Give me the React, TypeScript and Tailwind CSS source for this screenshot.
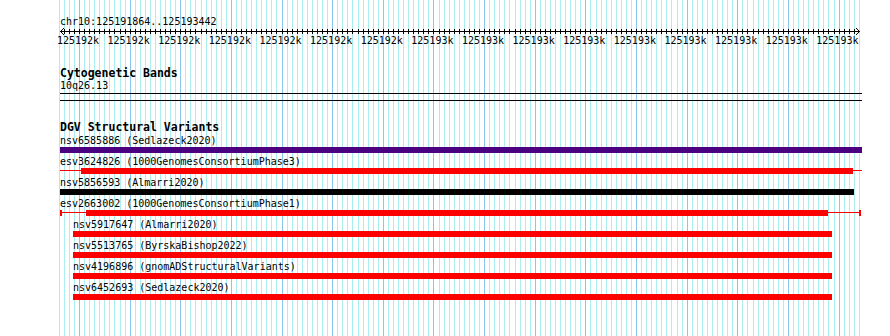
import React from 'react';

// page x of 125191900 and px per 10bp
const X0 = 79;
const STEP = 5.064;
const LEFT = 60;

const gridTicks = Array.from({ length: 159 }, (_, k) => {
  const i = k - 4;
  return { x: Math.round(X0 + i * STEP), major: i % 10 === 0 };
});

const tickLabels = Array.from({ length: 16 }, (_, i) => (i < 7 ? '125192k' : '125193k'));

interface Feature {
  name: string;
  color: string;
  start: number;
  thick: [number, number];
  end: number;
  caps?: boolean;
}

// x positions in page pixels: start/end of the whole feature, thick = the solid block
const features: Feature[] = [
  { name: 'nsv6585886 (Sedlazeck2020)', color: '#4b0082', start: 60, thick: [60, 862], end: 862 },
  { name: 'esv3624826 (1000GenomesConsortiumPhase3)', color: '#ff0000', start: 60, thick: [81, 853], end: 862 },
  { name: 'nsv5856593 (Almarri2020)', color: '#000000', start: 60, thick: [60, 854], end: 854 },
  { name: 'esv2663002 (1000GenomesConsortiumPhase1)', color: '#ff0000', start: 60, thick: [86, 828], end: 861, caps: true },
  { name: 'nsv5917647 (Almarri2020)', color: '#ff0000', start: 73, thick: [73, 832], end: 832 },
  { name: 'nsv5513765 (ByrskaBishop2022)', color: '#ff0000', start: 73, thick: [73, 832], end: 832 },
  { name: 'nsv4196896 (gnomADStructuralVariants)', color: '#ff0000', start: 73, thick: [73, 832], end: 832 },
  { name: 'nsv6452693 (Sedlazeck2020)', color: '#ff0000', start: 73, thick: [73, 832], end: 832 },
];

function GridLines() {
  return (
    <svg className="absolute left-0 top-0 pointer-events-none" width={890} height={336}>
      {gridTicks.map((t, i) => (
        <rect key={i} x={t.x} y={0} width={1} height={336} fill={t.major ? '#88c6f0' : '#aaeef0'} />
      ))}
    </svg>
  );
}

function Ruler() {
  return (
    <svg className="block shrink-0" width={890} height={8}>
      <line x1={60} y1={4.5} x2={860} y2={4.5} stroke="#000" strokeWidth={1} />
      <polyline points="64,1 60.5,4.5 64,8" fill="none" stroke="#000" strokeWidth={1} />
      <polyline points="856,1 859.5,4.5 856,8" fill="none" stroke="#000" strokeWidth={1} />
      {gridTicks
        .filter((t) => t.x > 62 && t.x < 857)
        .map((t, i) => (
          <rect key={i} x={t.x} y={2} width={1} height={5} fill="#000" />
        ))}
    </svg>
  );
}

function FeatureRow({ f }: { f: Feature }) {
  const capW = f.caps ? 2 : 0;
  const leftThin = f.thick[0] - f.start - capW;
  const rightThin = f.end - f.thick[1] - capW;
  return (
    <div className="flex flex-col h-[21px]" style={{ paddingLeft: f.start - LEFT }}>
      <div className="h-[12px] leading-[11px] text-[10px] whitespace-nowrap">{f.name}</div>
      <div className="flex items-start h-[6px]">
        {f.caps && <div className="h-[6px] w-[2px] shrink-0" style={{ background: f.color }} />}
        {leftThin > 0 && <div className="mt-[2px] h-px shrink-0" style={{ width: leftThin, background: f.color }} />}
        <div className="h-[6px] shrink-0" style={{ width: f.thick[1] - f.thick[0], background: f.color }} />
        {rightThin > 0 && <div className="mt-[2px] h-px shrink-0" style={{ width: rightThin, background: f.color }} />}
        {f.caps && <div className="h-[6px] w-[2px] shrink-0" style={{ background: f.color }} />}
      </div>
    </div>
  );
}

export default function App() {
  return (
    <div className="relative w-[890px] h-[336px] overflow-hidden bg-white text-black font-['DejaVu_Sans_Mono',monospace]">
      <GridLines />

      <div className="relative flex flex-col">
        {/* Location + ruler */}
        <div className="h-[27px] pt-[16px] pl-[60px] text-[10px] leading-[11px]">chr10:125191864..125193442</div>
        <Ruler />
        <div className="flex h-[11px] pl-[52.7px] text-[10px] leading-[11px]">
          {tickLabels.map((t, i) => (
            <span key={i} className="w-[50.64px] shrink-0 text-center">
              {t}
            </span>
          ))}
        </div>

        {/* Cytogenetic bands track */}
        <div className="flex flex-col mt-[21px] pl-[60px]">
          <div className="text-[11.5px] font-bold leading-[13px]">Cytogenetic Bands</div>
          <div className="h-[11px] text-[10px] leading-[11px]">10q26.13</div>
          <div className="mt-[2px] h-[8px] w-[802px] border-y border-black" />
        </div>

        {/* DGV track */}
        <div className="flex flex-col mt-[20px] pl-[60px] w-[862px]">
          <div className="h-[14px] text-[11.5px] font-bold leading-[13px]">DGV Structural Variants</div>
          {features.map((f) => (
            <FeatureRow key={f.name} f={f} />
          ))}
        </div>
      </div>
    </div>
  );
}
